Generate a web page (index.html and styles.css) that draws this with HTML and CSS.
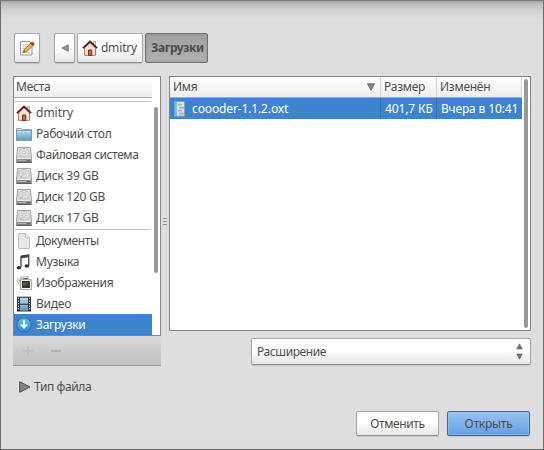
FILE: index.html
```
<!DOCTYPE html>
<html lang="ru">
<head>
<meta charset="utf-8">
<title>Открыть</title>
<link rel="stylesheet" href="styles.css">
</head>
<body>
<svg width="0" height="0" class="defs" aria-hidden="true">
  <defs>
    <linearGradient id="blue" x2="0" y2="1"><stop stop-color="#b4d6e9"/><stop offset="1" stop-color="#5e9bc6"/></linearGradient>
    <linearGradient id="metal" x2="0" y2="1"><stop stop-color="#e4e4e4"/><stop offset="1" stop-color="#cfcfcf"/></linearGradient>
    <linearGradient id="ball" x2="0" y2="1"><stop stop-color="#62c0f2"/><stop offset="1" stop-color="#2b85d2"/></linearGradient>
    <symbol id="home" viewBox="0 0 16 16">
      <path d="M11.5 1.5h2v4h-2z" fill="#f5e4da" stroke="#b29488" stroke-width=".8"/>
      <path d="M2.5 8 8 2.5 13.5 8v7.4h-11z" fill="#f3dfd3" stroke="#a08274"/>
      <path d="M.9 8.2 8 1.5l7.1 6.7" fill="none" stroke="#5d1b1b" stroke-width="1.8"/>
      <path d="M6.5 15.5V10h3.2v5.5z" fill="#c66c32" stroke="#743819"/>
    </symbol>
    <symbol id="folder" viewBox="0 0 16 16">
      <path d="M.5 2.5h5l1 1h9v5H.5z" fill="#dce7ed" stroke="#8ba5b5"/>
      <path d="M.5 4.5h15v9.9H.5z" fill="url(#blue)" stroke="#6d9cbc"/>
      <path d="M1.2 5.4h13.6" stroke="#c7e2f2"/>
    </symbol>
    <symbol id="disk" viewBox="0 0 16 16">
      <path d="M1.6.5h12.8l1.1 10.5v4.5H.5V11z" fill="url(#metal)" stroke="#a2a2a2"/>
      <ellipse cx="8" cy="5.7" rx="5.3" ry="4.2" fill="#dedede" stroke="#bdbdbd" stroke-width=".8"/>
      <ellipse cx="8" cy="5.2" rx="1.7" ry="1.2" fill="#f2f2f2" stroke="#b5b5b5" stroke-width=".7"/>
      <path d="m4 9.8 2.6-2.5" stroke="#aaa" stroke-width=".8"/>
      <path d="M1 12h14v3.2H1z" fill="#8b8b8b"/>
      <path d="M1 11.5h14" stroke="#eee" stroke-width=".8"/>
      <path d="M2 13.5h8" stroke="#b0b0b0"/><path d="M11 13.5h3" stroke="#666"/>
      <path d="M.5 15.3h15" stroke="#4d4d4d"/>
    </symbol>
    <symbol id="doc" viewBox="0 0 16 16">
      <path d="M2.5.5h7.3l3.7 4v11h-11z" fill="#e9e9e9" stroke="#bcbcbc"/>
      <path d="M9.5.7v4.1h4" fill="#fff" stroke="#bcbcbc"/>
    </symbol>
    <symbol id="music" viewBox="0 0 16 16">
      <path d="M5 13V2.2l7.8-1.2v10.5" fill="none" stroke="#343434" stroke-width="1.2"/>
      <path d="M5 1.8 12.9.7v2.5L5 4.4z" fill="#444"/>
      <ellipse cx="2.9" cy="13.8" rx="2.3" ry="1.7" fill="#333"/><ellipse cx="10.8" cy="12" rx="2.3" ry="1.7" fill="#333"/>
    </symbol>
    <symbol id="images" viewBox="0 0 16 16">
      <path d="m.7 5 6-3.7 3.6 6.4-6 3.7z" fill="#eee" stroke="#bbb"/>
      <path d="m2.8 5.5 3.2-2 2 4-3 1.8z" fill="#999"/>
      <path d="m5.3 2.3 7-1 1.5 8.5-7 1z" fill="#eee" stroke="#bbb"/>
      <path d="m6.5 3.4 5-.7.5 3-5 1z" fill="#555"/>
      <path d="M4.5 4.7h11v9.8h-11z" fill="#f5f5f5" stroke="#a8a8a8"/>
      <path d="M6 6h8v7H6z" fill="#353a30"/><path d="M7 7.5h6l-3 3H7z" fill="#555d4c"/>
    </symbol>
    <symbol id="video" viewBox="0 0 16 16">
      <path d="M1 .7h14v14.8H1z" fill="#282828"/>
      <path d="M4 1.7h8v6H4zM4 8.7h8v6H4z" fill="url(#blue)"/>
      <path d="M2.5 1.8v13M13.5 1.8v13" stroke="#eee" stroke-width="1.3" stroke-dasharray="1.3 1.3"/>
    </symbol>
    <symbol id="download" viewBox="0 0 16 16">
      <circle cx="8" cy="8" r="7.2" fill="url(#ball)" stroke="#236fb4"/>
      <path d="M8 3.5v5" stroke="#fff" stroke-width="2.2"/><path d="M3.9 7.6h8.2L8 12z" fill="#fff"/>
    </symbol>
    <symbol id="package" viewBox="0 0 16 16">
      <path d="M2.5.5h10v14.7h-10z" fill="#dce4e6" stroke="#849fae"/>
      <path d="M3 1h2v13.7H3z" fill="#6cc1ec"/>
      <path d="M6 3.7h4m-3 3h5M6 9.7h4m-3 3h5" stroke="#a9afb0" stroke-width="1.7"/>
    </symbol>
    <symbol id="edit" viewBox="0 0 16 16">
      <path d="M1.5 1.5h9l2.5 2.4v11.1H1.5z" fill="#f7f7f5" stroke="#999b97"/>
      <path d="M3.5 4.5h6m-6 2h5m-5 2h4m-4 2h2m-2 2h7" stroke="#c8c9c6" stroke-width=".8"/>
      <path d="m4.5 12.5.9-3.2 6.7-6.5 2.4 2.3-6.7 6.5z" fill="#f3a83b" stroke="#98591c" stroke-width=".7"/>
      <path d="m11.4 3.5 1.1-1.3c1-.9 3.4 1.1 2.5 2.3l-1.2 1.3z" fill="#cf3535" stroke="#922" stroke-width=".6"/>
      <path d="m4.3 12.7.5-1.8 1.2 1.2z" fill="#222"/>
    </symbol>
  </defs>
</svg>
<main class="window">
  <nav class="path">
    <button class="btn edit"><svg class="icon"><use href="#edit"/></svg></button>
    <button class="btn back"><svg width="8" height="8"><path d="M7.3.8v6.4L.8 4z" fill="#929292" stroke="#626262" stroke-width=".7"/></svg></button>
    <button class="btn home"><svg class="icon"><use href="#home"/></svg><span>dmitry</span></button>
    <button class="btn current"><span>Загрузки</span></button>
  </nav>
  <div class="panes">
    <aside class="side">
      <div class="places">
        <div class="list">
          <div class="head"><span class="snug">Места</span></div>
          <div class="rule first"></div>
          <div class="row"><svg class="icon"><use href="#home"/></svg><span>dmitry</span></div>
          <div class="row"><svg class="icon"><use href="#folder"/></svg><span class="snug">Рабочий стол</span></div>
          <div class="row"><svg class="icon"><use href="#disk"/></svg><span class="tight">Файловая система</span></div>
          <div class="row"><svg class="icon"><use href="#disk"/></svg><span class="snug">Диск 39 GB</span></div>
          <div class="row"><svg class="icon"><use href="#disk"/></svg><span class="snug">Диск 120 GB</span></div>
          <div class="row"><svg class="icon"><use href="#disk"/></svg><span class="snug">Диск 17 GB</span></div>
          <div class="rule"></div>
          <div class="row"><svg class="icon"><use href="#doc"/></svg><span class="tight">Документы</span></div>
          <div class="row"><svg class="icon"><use href="#music"/></svg><span class="snug">Музыка</span></div>
          <div class="row"><svg class="icon"><use href="#images"/></svg><span class="snug">Изображения</span></div>
          <div class="row"><svg class="icon"><use href="#video"/></svg><span class="snug">Видео</span></div>
          <div class="row selected"><svg class="icon"><use href="#download"/></svg><span class="snug">Загрузки</span></div>
        </div>
        <div class="thumb"></div>
      </div>
      <div class="tools">
        <svg width="10" height="10"><path d="M0 5h10M5 0v10" stroke="#c2c2c2" stroke-width="2"/></svg>
        <svg width="10" height="10"><path d="M0 5h10" stroke="#b4b4b4" stroke-width="2"/></svg>
      </div>
    </aside>
    <div class="grip"><i></i><i></i><i></i></div>
    <section class="files">
      <div class="table">
        <div class="head cols">
          <div class="name"><span class="snug">Имя</span><svg width="8" height="8"><path d="M.5.8h7L4 7.3z" fill="#858585" stroke="#555" stroke-width=".8"/></svg></div>
          <div><span class="snug">Размер</span></div>
          <div><span class="snug">Изменён</span></div>
        </div>
        <div class="cols file">
          <div><svg class="icon"><use href="#package"/></svg><span class="slight">coooder-1.1.2.oxt</span></div>
          <div><span class="slight">401,7 КБ</span></div>
          <div><span class="slight">Вчера в 10:41</span></div>
        </div>
      </div>
      <div class="thumb"></div>
    </section>
  </div>
  <div class="btn filter"><span class="tight">Расширение</span><svg width="7" height="17"><path d="M3.5.8 6.3 6H.7zM.7 11h5.6l-2.8 5.2z" fill="#777" stroke="#5a5a5a" stroke-width=".6"/></svg></div>
  <div class="expander"><svg width="12" height="12"><path d="M.7.7v10.6L11 6z" fill="#858585" stroke="#4c4c4c"/></svg><span class="tight">Тип файла</span></div>
  <footer class="actions">
    <button class="btn cancel"><span class="tight">Отменить</span></button>
    <button class="btn open"><span class="snug">Открыть</span></button>
  </footer>
</main>
</body>
</html>
```
FILE: styles.css
```
* { box-sizing: border-box; }
body { margin: 0; }
.defs { position: absolute; }
svg { display: block; flex: none; }
.icon { width: 16px; height: 16px; }
.slight { letter-spacing: -0.13px; }
.snug { letter-spacing: -0.25px; }
.tight { letter-spacing: -0.4px; }

.window {
  width: 544px;
  height: 450px;
  padding: 32px 12px 0;
  border: 1px solid #6c6c6c;
  border-top-color: #7c7c7c;
  background: linear-gradient(#a5a5a5 0, #bdbdbd 3px, #d0d0d0 9px, #dedede 18px);
  color: #4d4d4d;
  font: 12px/16px "Noto Sans", "Open Sans", sans-serif;
  white-space: nowrap;
  overflow: hidden;
}

.btn {
  display: flex;
  align-items: center;
  justify-content: center;
  margin: 0;
  padding: 0;
  border: 1px solid #a6a6a6;
  border-bottom-color: #8e8e8e;
  border-radius: 2px;
  background: linear-gradient(#fff 0, #fff 45%, #e6e6e6);
  box-shadow: 0 1px 1px #c2c2c2;
  color: inherit;
  font: inherit;
}

.path { display: flex; height: 30px; margin-left: 1px; }
.edit { width: 26px; }
.back { width: 21px; margin-left: 14px; }
.home { width: 66px; margin-left: 2px; padding-right: 1px; gap: 3px; }
.home span { letter-spacing: -0.15px; }
.current {
  width: 63px;
  margin-left: 2px;
  padding-left: 2px;
  border-color: #707070;
  background: linear-gradient(#a0a0a0, #b0b0b0);
  box-shadow: inset 0 0 2px #888;
  font-weight: 700;
}
.current span { letter-spacing: -0.4px; }

.panes { display: flex; height: 290px; margin-top: 13px; }
.side { width: 148px; }
.places {
  display: flex;
  height: 260px;
  border: 1px solid #858585;
  background: #fff;
}
.list { width: 138px; }
.head {
  height: 21px;
  padding: 2px 2px 0;
  border-bottom: 1px solid #aaa;
  background: linear-gradient(#fff, #ededed);
}
.rule { height: 1px; margin: 1px 1px 0; background: #bdbdbd; }
.rule.first { margin-top: 3px; }
.row {
  display: flex;
  align-items: center;
  height: 21px;
  padding-left: 2px;
  gap: 4px;
}
.selected, .file { background: #3d84cf; color: #fff; }
.places .thumb { width: 4px; height: 166px; margin: 30px 0 0 2px; }
.thumb { border-radius: 2px; background: #999; }
.tools {
  display: flex;
  align-items: center;
  height: 30px;
  padding-left: 10px;
  gap: 18px;
  border-bottom: 1px solid #999;
  background: linear-gradient(#d8d8d8, #c1c1c1);
}

.grip {
  display: flex;
  flex-direction: column;
  gap: 2px;
  width: 8px;
  padding: 142px 2px 0;
}
.grip i { height: 1px; background: #929292; }

.files {
  display: flex;
  width: 362px;
  height: 255px;
  border: 1px solid #858585;
  background: #fff;
}
.table { width: 352px; }
.cols { display: grid; grid-template-columns: 211px 56px 85px; }
.cols > div { display: flex; align-items: center; border-right: 1px solid #d4d4d4; }
.cols.head { padding: 0; }
.head.cols > div { padding: 0 5px 0 3px; }
.name { justify-content: space-between; }
.file { height: 21px; }
.file > div { padding-left: 4px; border-right-color: #3471b3; }
.file > div:first-child { padding-left: 2px; gap: 4px; }
.file > div:last-child { border: 0; }
.files .thumb { width: 4px; height: 249px; margin: 2px 0 0 2px; }

.filter {
  justify-content: space-between;
  width: 280px;
  height: 27px;
  margin: -28px 0 0 238px;
  padding: 0 7px 0 5px;
}
.expander { display: flex; align-items: center; gap: 3px; height: 16px; margin: 14px 0 0 6px; }
.actions { display: flex; justify-content: flex-end; gap: 8px; margin: 16px 1px 0 0; }
.actions .btn { width: 83px; height: 25px; }
.actions .open {
  border-color: #48698f;
  background: linear-gradient(#9ac3f2, #649fe2);
  box-shadow: inset 0 0 0 1px #9bc1ed88, 0 1px 1px #c2c2c2;
}
```
